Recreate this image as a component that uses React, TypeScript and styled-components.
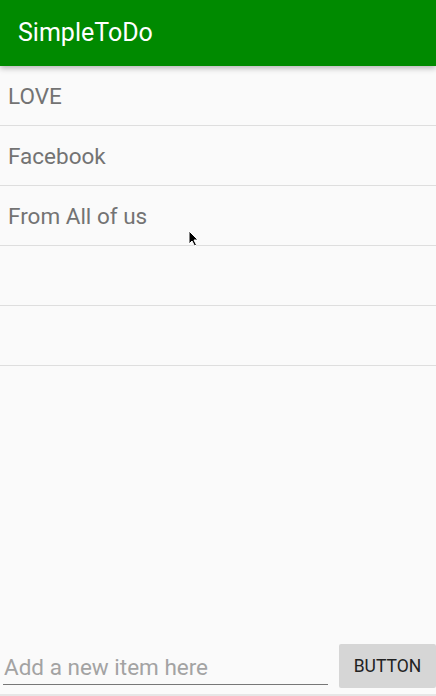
import React from "react";
import styled, { createGlobalStyle } from "styled-components";

const Global = createGlobalStyle`
  html, body { margin: 0; padding: 0; background: #fafafa; }
  body { font-family: Roboto, "Noto Sans", sans-serif; }
`;

const Screen = styled.div`
  position: relative;
  width: 436px;
  height: 696px;
  display: flex;
  flex-direction: column;
  background: #fafafa;
  overflow: hidden;
`;

const AppBar = styled.header`
  height: 66px;
  flex: none;
  background: #008a00;
  display: flex;
  align-items: center;
  padding-left: 18px;
  box-shadow: 0 2px 6px rgba(0, 0, 0, 0.3);
  position: relative;
  z-index: 1;
`;

const Title = styled.h1`
  margin: 0;
  font-weight: 400;
  font-size: 25px;
  color: #ffffff;
  padding-bottom: 2px;
`;

const List = styled.ul`
  margin: 0;
  padding: 0;
  list-style: none;
  flex: 1;
`;

const Row = styled.li`
  height: 59px;
  border-bottom: 1px solid #dedede;
  display: flex;
  align-items: center;
  padding-left: 8px;
  font-size: 22.5px;
  color: #737373;
`;

const Bottom = styled.div`
  display: flex;
  align-items: flex-end;
  padding: 0 0 6px 3px;
  gap: 11px;
  border-bottom: 2px solid #e6e6e6;
`;

const Input = styled.input`
  flex: 1;
  border: none;
  border-bottom: 1px solid #777;
  background: transparent;
  font-family: Roboto, sans-serif;
  font-size: 22.5px;
  line-height: 26px;
  padding: 0 0 4px 1px;
  outline: none;
  margin: 0 0 3px 0;
  &::placeholder { color: #a3a3a3; }
`;

const Button = styled.button`
  width: 97px;
  height: 44px;
  border: none;
  border-radius: 2px;
  background: #d6d6d6;
  font-family: Roboto, sans-serif;
  font-size: 17.5px;
  color: #222;
  padding: 0;
`;

const Cursor = styled.svg`
  position: absolute;
  left: 188px;
  top: 230px;
`;

const items = ["LOVE", "Facebook", "From All of us", "", ""];

export default function App() {
  return (
    <>
      <Global />
      <Screen>
        <AppBar>
          <Title>SimpleToDo</Title>
        </AppBar>
        <List>
          {items.map((t, i) => (
            <Row key={i}>{t}</Row>
          ))}
        </List>
        <Bottom>
          <Input placeholder="Add a new item here" />
          <Button>BUTTON</Button>
        </Bottom>
        <Cursor width="12" height="18" viewBox="0 0 12 18">
          <path d="M1 1 L1 14 L4 11 L6.5 16 L8.5 15 L6 10 L10 10 Z" fill="#000" stroke="#fff" strokeWidth="1" />
        </Cursor>
      </Screen>
    </>
  );
}
